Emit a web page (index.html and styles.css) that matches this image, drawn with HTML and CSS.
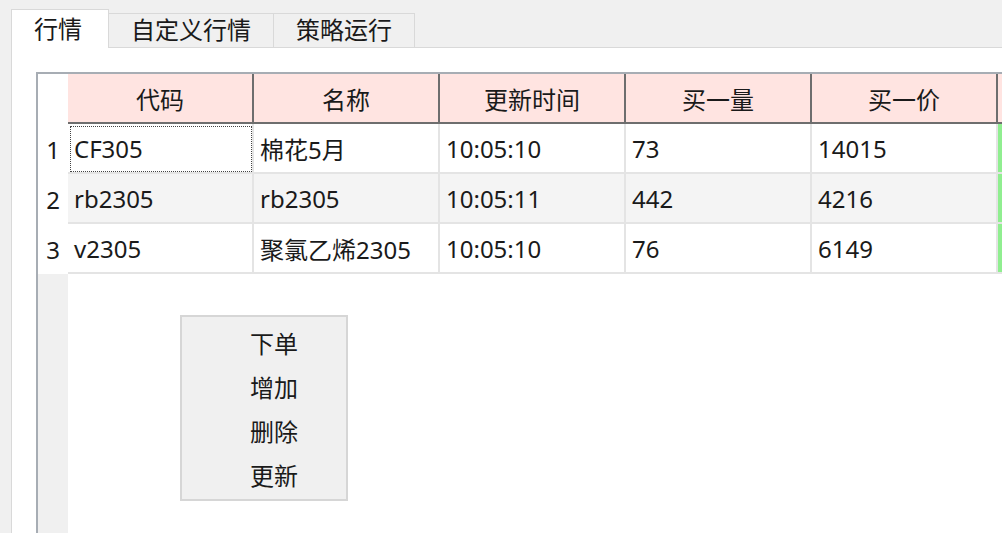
FILE: index.html
```html
<!DOCTYPE html>
<html lang="zh-CN">
<head>
  <meta charset="UTF-8" />
  <title>行情</title>
  <link rel="stylesheet" href="styles.css">
</head>
<body>
  <div class="tabs">
    <div class="tab-bar">
      <div class="tab active">行情</div>
      <div class="tab">自定义行情</div>
      <div class="tab">策略运行</div>
    </div>
    <div class="pane">
      <div class="table-box">
        <table class="grid">
          <thead>
            <tr>
              <th class="corner"></th>
              <th>代码</th>
              <th>名称</th>
              <th>更新时间</th>
              <th>买一量</th>
              <th>买一价</th>
              <th class="more"></th>
            </tr>
          </thead>
          <tbody>
            <tr>
              <th class="num">1</th>
              <td class="focus">CF305</td>
              <td>棉花5月</td>
              <td>10:05:10</td>
              <td>73</td>
              <td>14015</td>
              <td class="up"></td>
            </tr>
            <tr class="alt">
              <th class="num">2</th>
              <td>rb2305</td>
              <td>rb2305</td>
              <td>10:05:11</td>
              <td>442</td>
              <td>4216</td>
              <td class="up"></td>
            </tr>
            <tr>
              <th class="num">3</th>
              <td>v2305</td>
              <td>聚氯乙烯2305</td>
              <td>10:05:10</td>
              <td>76</td>
              <td>6149</td>
              <td class="up"></td>
            </tr>
          </tbody>
        </table>

        <!-- 右键菜单 -->
        <ul class="menu">
          <li>下单</li>
          <li>增加</li>
          <li>删除</li>
          <li>更新</li>
        </ul>
      </div>
    </div>
  </div>
</body>
</html>
```

FILE: styles.css
```css
html, body {
  height: 100%;
}
body {
  margin: 0;
  background: #f0f0f0;
  font-family: "Noto Sans", "Noto Sans CJK SC", sans-serif;
  font-size: 24px;
  color: #1a1a1a;
  overflow: hidden;
}
.tabs {
  display: flex;
  flex-direction: column;
  height: 100%;
  padding: 9px 0 0 11px;
  box-sizing: border-box;
}
.tab-bar {
  display: flex;
  align-items: flex-end;
  height: 38px;
}
.tab {
  height: 34px;
  line-height: 32px;
  padding: 0 22px;
  background: #f0f0f0;
  border: 1px solid #d9d9d9;
  border-bottom: none;
  border-left: none;
  box-sizing: border-box;
}
.tab.active {
  height: 39px;
  line-height: 38px;
  padding: 0 26px 0 22px;
  background: #fff;
  border-left: 1px solid #d9d9d9;
  margin-bottom: -1px;
  position: relative;
}
.pane {
  flex: 1;
  min-width: 0;
  background: #fff;
  border-top: 1px solid #d9d9d9;
  border-left: 1px solid #d9d9d9;
  padding: 24px 0 0 24px;
  display: flex;
}
.table-box {
  flex: 1;
  min-width: 0;
  position: relative;
  overflow: hidden;
  border-top: 2px solid #a7adb4;
  border-left: 2px solid #a7adb4;
  background: linear-gradient(to right, #f0f0f0 30px, #fff 30px);
}
.grid {
  border-spacing: 0;
  table-layout: fixed;
  width: 1000px;
}
.grid th,
.grid td {
  box-sizing: border-box;
  width: 186px;
  padding: 0;
  white-space: nowrap;
  overflow: hidden;
}
.grid thead th {
  height: 50px;
  font-weight: normal;
  text-align: center;
  background: #ffe4e1;
  border-right: 2px solid #6e6e6e;
  border-bottom: 2px solid #6e6e6e;
}
.grid thead th.corner {
  width: 30px;
  background: #fff;
  border: none;
  border-bottom: 2px solid #fff;
}
.grid thead th.more {
  width: 100px;
}
.grid td {
  height: 50px;
  padding-left: 6px;
  border-right: 2px solid #e4e4e4;
  border-bottom: 2px solid #e4e4e4;
  background: #fff;
}
.grid tr.alt td {
  background: #f4f4f4;
}
.grid th.num {
  width: 30px;
  font-weight: normal;
  text-align: center;
  background: #fff;
}
.grid td.focus {
  outline: 1px dotted #444;
  outline-offset: -3px;
}
.grid td.up,
.grid tr.alt td.up {
  background: #90ee90;
  border-right: none;
}
.menu {
  position: absolute;
  left: 142px;
  top: 241px;
  width: 168px;
  margin: 0;
  padding: 5px 0;
  list-style: none;
  background: #f0f0f0;
  border: 2px solid #d6d6d6;
  box-sizing: border-box;
  height: 186px;
}
.menu li {
  height: 44px;
  line-height: 44px;
  padding-left: 68px;
}
```
